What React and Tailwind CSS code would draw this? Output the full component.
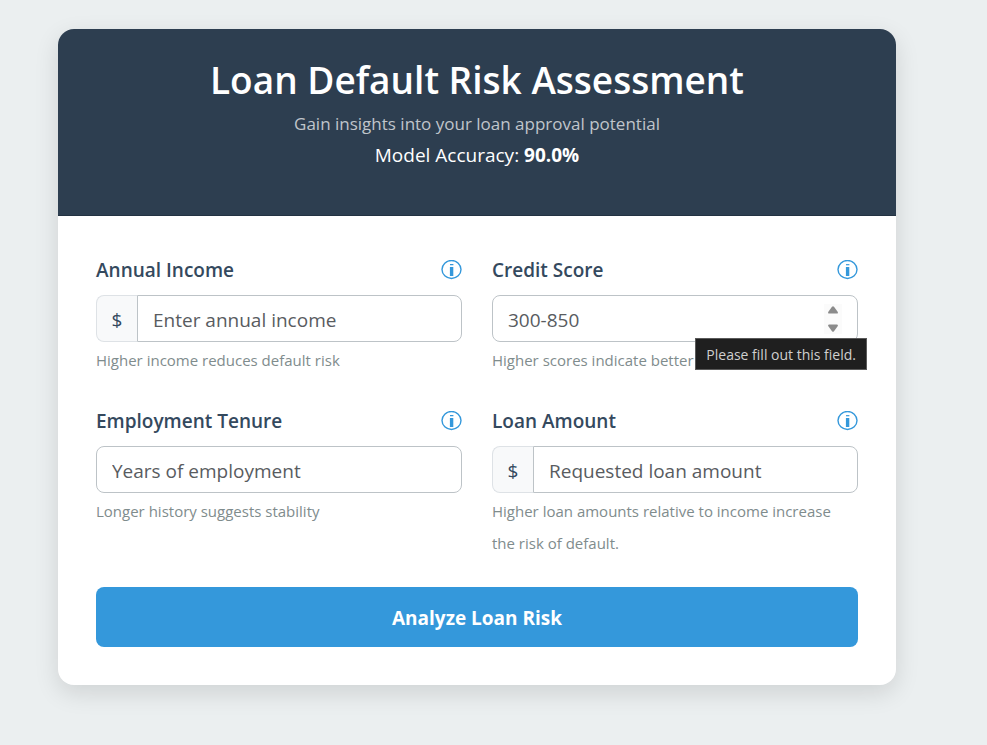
import React from "react";

function InfoIcon() {
  return (
    <svg
      width="22"
      height="20"
      viewBox="0 0 22 20"
      fill="none"
      stroke="#3498db"
      aria-hidden="true"
    >
      <ellipse cx="11.5" cy="9.5" rx="9.5" ry="9" strokeWidth="1.4" />
      <path d="M10 4.7h3.4" strokeWidth="1.2" />
      <path d="M11.6 7v9" strokeWidth="3.4" />
    </svg>
  );
}

function Spinner() {
  return (
    <div className="absolute right-4 top-[9px] flex h-[30px] w-[18px] flex-col justify-between bg-[#fbfbfb]">
      <button type="button" aria-label="Increase" className="flex h-3 items-center justify-center">
        <svg width="10" height="8" viewBox="0 0 10 8" fill="#8b8b8b">
          <path d="M4 .8Q5-.3 6 .8L9.8 6Q10.2 7.6 8.8 7.6H1.2Q-.2 7.6.2 6Z" />
        </svg>
      </button>
      <button type="button" aria-label="Decrease" className="flex h-3 items-center justify-center">
        <svg width="10" height="8" viewBox="0 0 10 8" fill="#8b8b8b">
          <path d="M4 7.2Q5 8.3 6 7.2L9.8 2Q10.2.4 8.8.4H1.2Q-.2.4.2 2Z" />
        </svg>
      </button>
    </div>
  );
}

function Field({ id, label, placeholder, hint, money, spinner, tooltip }) {
  return (
    <div>
      <div className="mb-[9px] flex h-8 items-center justify-between">
        <label htmlFor={id} className="text-[19px] font-semibold text-[#34495e]">
          {label}
        </label>
        <button type="button" aria-label={`About ${label}`}>
          <InfoIcon />
        </button>
      </div>
      <div className="relative flex h-[47px]">
        {money && (
          <span className="flex w-[41px] shrink-0 items-center justify-center rounded-l-lg border border-r-0 border-[#dee2e6] bg-[#f8f9fa] pt-[3px] text-[19px] text-[#34495e]">
            $
          </span>
        )}
        <input
          id={id}
          type="number"
          placeholder={placeholder}
          className={`w-full min-w-0 border border-[#bdc3c7] bg-white px-[15px] pt-[3px] text-[19px] text-[#34495e] outline-none [appearance:textfield] placeholder:text-[#595c5f] [&::-webkit-inner-spin-button]:appearance-none ${
            money ? "rounded-r-lg" : "rounded-lg"
          }`}
        />
        {spinner && <Spinner />}
        {tooltip && (
          <div
            role="tooltip"
            className="absolute -right-[9px] top-[43px] z-10 flex h-8 items-center whitespace-nowrap border border-[#5a5a5a] bg-[#1f1f1f] px-[10px] text-[14px] text-[#cfcfcf]"
          >
            {tooltip}
          </div>
        )}
      </div>
      <p className="mt-[2px] pr-3 text-[15px] leading-8 text-[#7f8c8d]">{hint}</p>
    </div>
  );
}

export default function App() {
  return (
    <div className="min-h-screen bg-[#ebeff0] pb-[60px] pl-[58px] pr-[91px] pt-[29px] font-['Open_Sans','Noto_Sans',sans-serif]">
      <main className="overflow-hidden rounded-2xl bg-white shadow-[0_8px_24px_rgba(0,0,0,0.12)]">
        <header className="border-b border-[#233242] bg-[#2d3e50] pb-[45px] pt-[27px] text-center text-white">
          <h1 className="text-[37px] font-semibold leading-[48px]">
            Loan Default Risk Assessment
          </h1>
          <p className="mt-1 text-[17px] leading-8 text-[#c0c5cb]">
            Gain insights into your loan approval potential
          </p>
          <p className="text-[19px] leading-[30px]">
            Model Accuracy: <strong className="font-bold">90.0%</strong>
          </p>
        </header>
        <form className="p-[38px]" onSubmit={(e) => e.preventDefault()}>
          <div className="grid grid-cols-2 gap-x-[30px] gap-y-[29px]">
            <Field
              id="income"
              label="Annual Income"
              placeholder="Enter annual income"
              hint="Higher income reduces default risk"
              money
            />
            <Field
              id="score"
              label="Credit Score"
              placeholder="300-850"
              hint="Higher scores indicate better"
              spinner
              tooltip="Please fill out this field."
            />
            <Field
              id="tenure"
              label="Employment Tenure"
              placeholder="Years of employment"
              hint="Longer history suggests stability"
            />
            <Field
              id="amount"
              label="Loan Amount"
              placeholder="Requested loan amount"
              hint="Higher loan amounts relative to income increase the risk of default."
              money
            />
          </div>
          <button
            type="submit"
            className="mt-7 h-[60px] w-full rounded-lg bg-[#3498db] pt-[2px] text-[19px] font-bold text-white"
          >
            Analyze Loan Risk
          </button>
        </form>
      </main>
    </div>
  );
}
